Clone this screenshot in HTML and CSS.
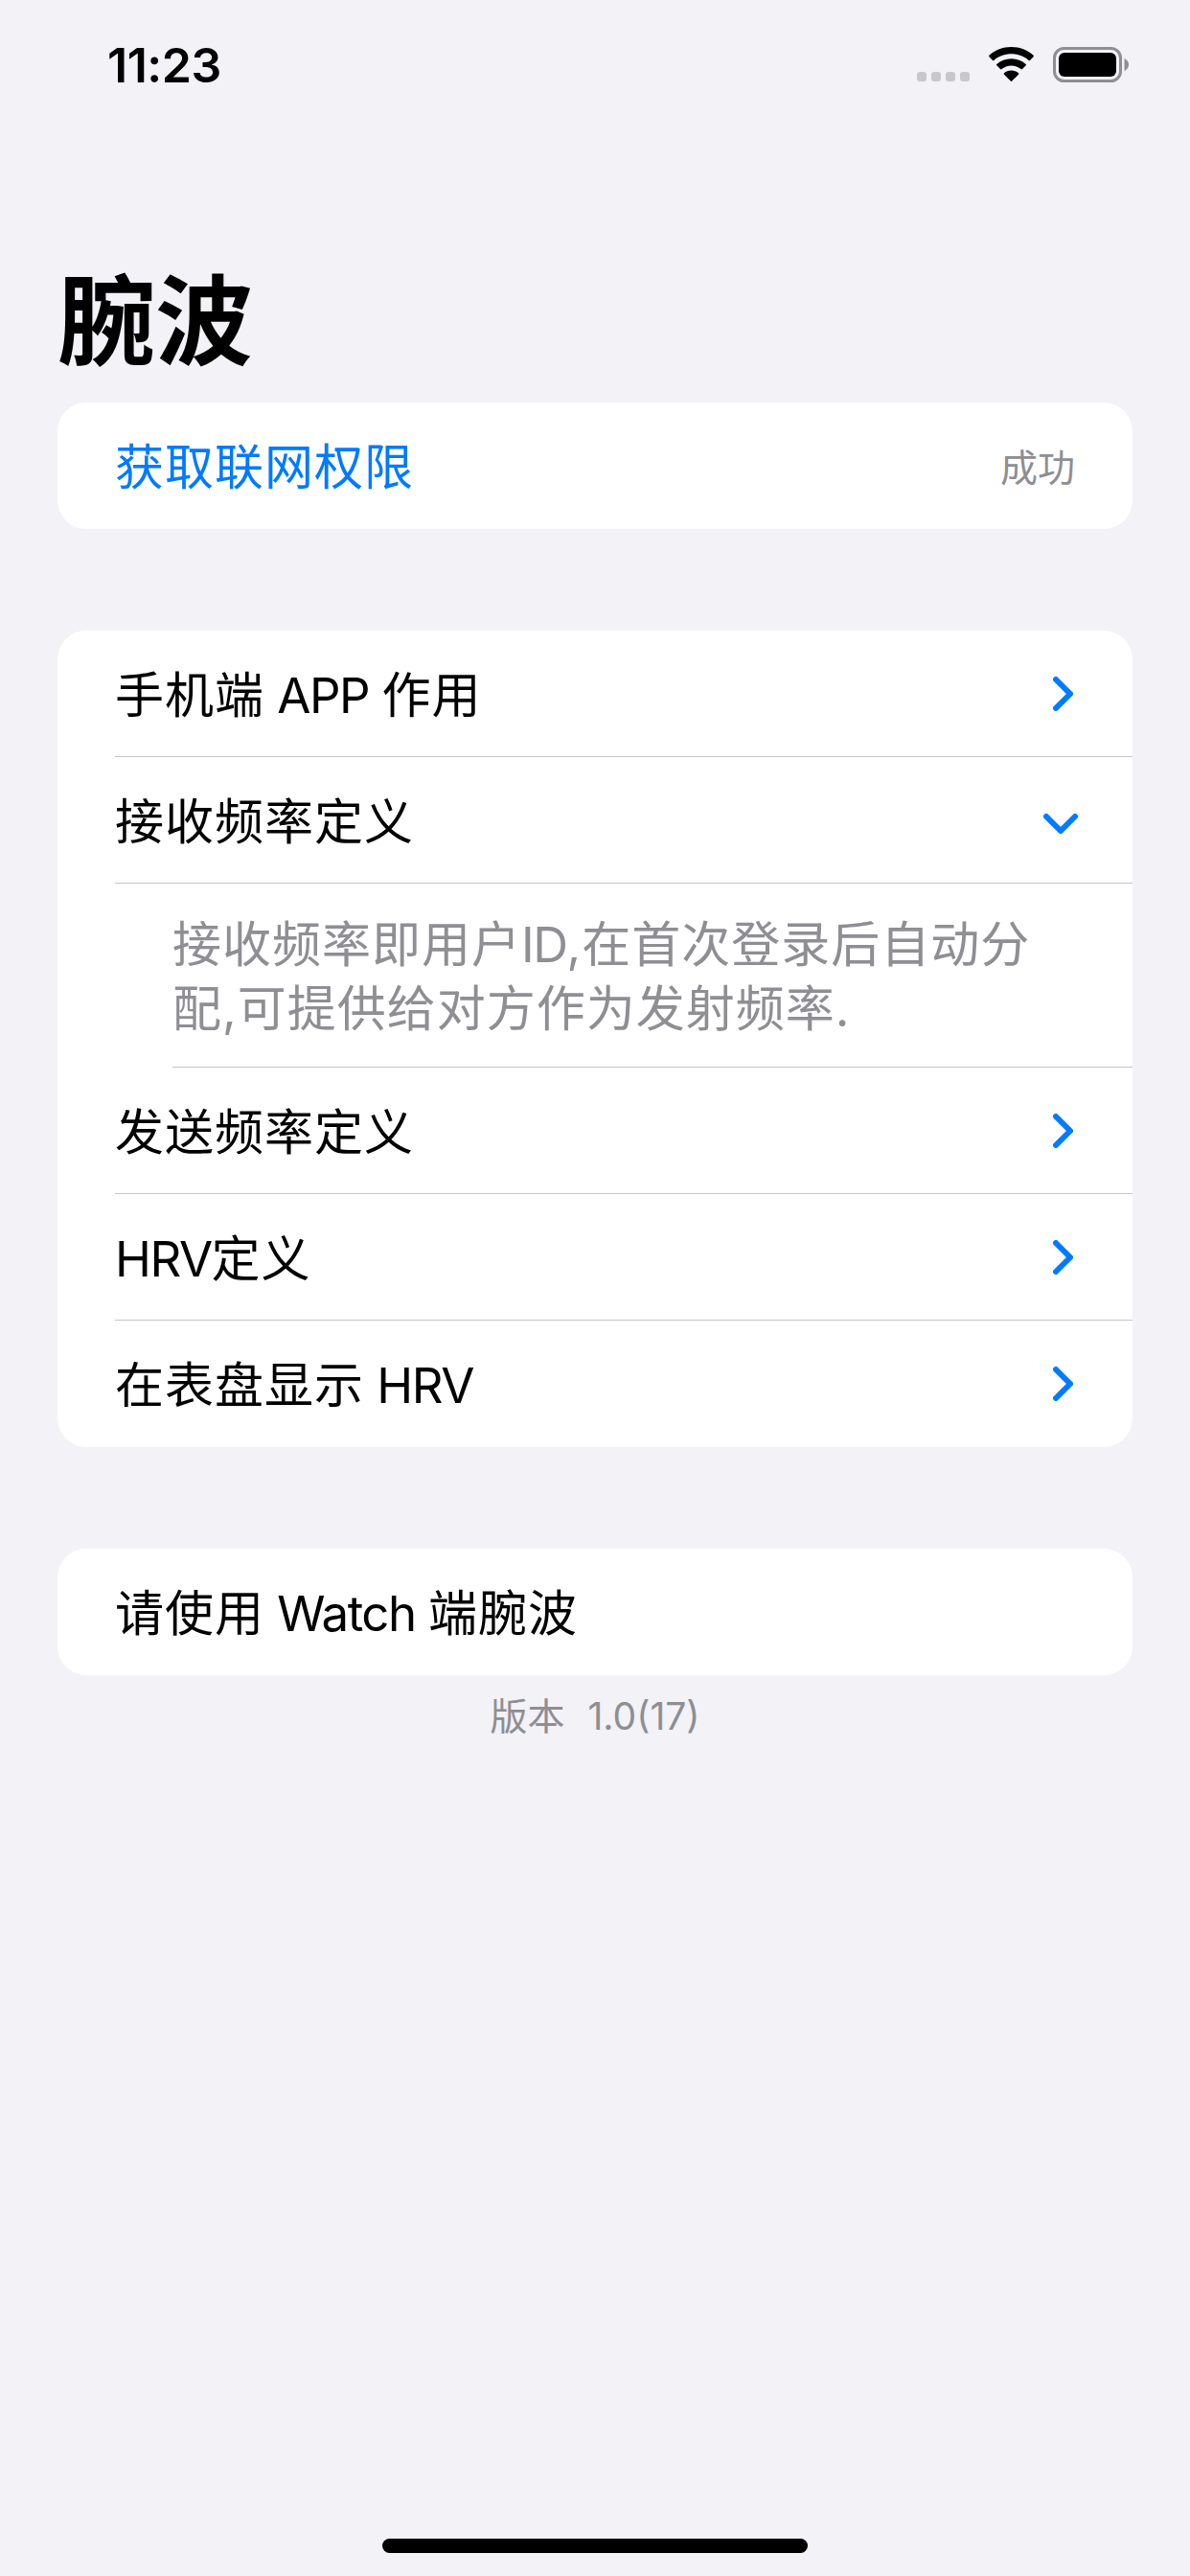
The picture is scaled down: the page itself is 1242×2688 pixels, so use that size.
FILE: index.html
```html
<!DOCTYPE html>
<html>
<head>
    <title>腕波</title>
    <link rel="stylesheet" href="styles.css">
</head>
<body>
    <div class="status-bar">
        <span class="time">11:23</span>
        <div class="status-icons">
            <div class="signal">
                <span class="dot"></span>
                <span class="dot"></span>
                <span class="dot"></span>
                <span class="dot"></span>
            </div>
            <svg class="wifi" width="47" height="36" viewBox="0 0 47 36">
                <path d="M23.5 0C14.6 0 6.6 3.3 0.4 8.8a1 1 0 0 0 0 1.4l3.6 3.7a1 1 0 0 0 1.4 0C10.2 9.700 16.500 7.300 23.500 7.300s13.300 2.400 18.100 6.600a1 1 0 0 0 1.400 0l3.600-3.700a1 1 0 0 0 0-1.400C40.400 3.300 32.400 0 23.500 0z"/>
                <path d="M23.500 12.200c-5.800 0-11.100 2.100-15.200 5.700a1 1 0 0 0 0 1.400l3.700 3.700a1 1 0 0 0 1.400 0.100c2.700-2.300 6.300-3.700 10.100-3.700s7.400 1.400 10.100 3.700a1 1 0 0 0 1.400-0.100l3.700-3.700a1 1 0 0 0 0-1.400c-4.100-3.600-9.400-5.700-15.200-5.700z"/>
                <path d="M23.500 24.500c-2.900 0-5.500 1-7.500 2.800a1 1 0 0 0 0 1.400l6.800 6.900a1 1 0 0 0 1.400 0l6.800-6.900a1 1 0 0 0 0-1.400c-2-1.800-4.600-2.800-7.500-2.800z"/>
            </svg>
            <svg class="battery" width="79" height="37" viewBox="0 0 79 37">
                <rect x="1.500" y="1.500" width="69" height="34" rx="10" fill="none" stroke="#8e8e93" stroke-width="3"/>
                <rect x="6" y="6" width="60" height="25" rx="6" fill="#000"/>
                <path d="M74.500 12v13c2.500-1 4.500-3.500 4.500-6.500s-2-5.500-4.500-6.500z" fill="#8e8e93"/>
            </svg>
        </div>
    </div>

    <h1 class="page-title">腕波</h1>

    <div class="card card-first">
        <div class="row">
            <span class="row-title link">获取联网权限</span>
            <span class="row-value">成功</span>
        </div>
    </div>

    <div class="card">
        <div class="row row-line">
            <span class="row-title">手机端 <span class="latin">APP</span> 作用</span>
            <svg class="chevron" width="21" height="36" viewBox="0 0 21 36"><path d="M3 3l15 15L3 33"/></svg>
        </div>
        <div class="row row-line">
            <span class="row-title">接收频率定义</span>
            <svg class="chevron-down" width="36" height="21" viewBox="0 0 36 21"><path d="M3 3l15 15L33 3"/></svg>
        </div>
        <div class="detail">
            <p class="detail-text">
                <span class="detail-line">接收频率即用户<span class="latin">ID</span>,在首次登录后自动分</span>
                <span class="detail-line">配,可提供给对方作为发射频率.</span>
            </p>
        </div>
        <div class="row row-line">
            <span class="row-title">发送频率定义</span>
            <svg class="chevron" width="21" height="36" viewBox="0 0 21 36"><path d="M3 3l15 15L3 33"/></svg>
        </div>
        <div class="row row-line">
            <span class="row-title"><span class="latin">HRV</span>定义</span>
            <svg class="chevron" width="21" height="36" viewBox="0 0 21 36"><path d="M3 3l15 15L3 33"/></svg>
        </div>
        <div class="row">
            <span class="row-title">在表盘显示 <span class="latin">HRV</span></span>
            <svg class="chevron" width="21" height="36" viewBox="0 0 21 36"><path d="M3 3l15 15L3 33"/></svg>
        </div>
    </div>

    <div class="card">
        <div class="row">
            <span class="row-title">请使用 <span class="latin">Watch</span> 端腕波</span>
        </div>
    </div>
    <div class="version"><span>版本</span><span>1.0(17)</span></div>

    <div class="home-indicator"></div>
</body>
</html>
```

FILE: styles.css
```css
* {
    margin: 0;
    padding: 0;
    box-sizing: border-box;
}

body {
    font-family: Inter, 'Noto Sans CJK SC', sans-serif;
    width: 1242px;
    height: 2688px;
    background-color: #f2f2f7;
    color: #000;
    display: flex;
    flex-direction: column;
    padding: 0 60px;
    overflow: hidden;
}

.status-bar {
    display: flex;
    justify-content: space-between;
    align-items: flex-start;
    height: 100px;
    margin: 0 -60px;
    padding: 41px 64px 0 112px;
}

.time {
    font-size: 50px;
    line-height: 54px;
    font-weight: 600;
    letter-spacing: -0.5px;
}

.status-icons {
    display: flex;
    align-items: flex-start;
    padding-top: 8px;
}

.signal {
    display: flex;
    gap: 5px;
    padding-top: 26px;
    margin-right: 20px;
}

.dot {
    width: 10px;
    height: 10px;
    border-radius: 3px;
    background-color: #c7c7cc;
}

.wifi {
    margin-right: 20px;
}

.page-title {
    font-size: 102px;
    line-height: 132px;
    font-weight: 700;
    margin-top: 170px;
    height: 150px;
}

.card {
    background-color: #fff;
    border-radius: 30px;
    margin-top: 106px;
    overflow: hidden;
}

.card-first {
    margin-top: 0;
}

.row {
    display: flex;
    justify-content: space-between;
    align-items: center;
    height: 132px;
    padding: 0 60px;
    position: relative;
}

.row-line::after {
    content: "";
    position: absolute;
    left: 60px;
    right: 0;
    bottom: 0;
    height: 1px;
    background-color: #c6c6c8;
}

.row-title {
    font-size: 51px;
    letter-spacing: 1px;
    word-spacing: -2px;
    margin-bottom: 4px;
}

.latin {
    letter-spacing: -1.5px;
}

.link {
    color: #007aff;
}

.row-value {
    font-size: 39px;
    color: #8e8e93;
    margin-bottom: 3px;
}

.chevron {
    margin-right: 2px;
    flex-shrink: 0;
}

.chevron-down {
    margin-top: 7px;
    margin-right: -3px;
    flex-shrink: 0;
}

.chevron path,
.chevron-down path {
    fill: none;
    stroke: #007aff;
    stroke-width: 6;
    stroke-linecap: round;
    stroke-linejoin: round;
}

.detail {
    margin-left: 120px;
    height: 192px;
    padding: 30px 60px 0 0;
    border-bottom: 1px solid #c6c6c8;
}

.detail-text {
    font-size: 51px;
    line-height: 67px;
    letter-spacing: 1px;
    color: #8e8e93;
}

.detail-line {
    display: block;
    white-space: nowrap;
}

.version {
    display: flex;
    justify-content: center;
    gap: 24px;
    font-size: 39px;
    line-height: 50px;
    color: #8e8e93;
    margin-top: 18px;
}

.home-indicator {
    width: 444px;
    height: 15px;
    border-radius: 8px;
    background-color: #000;
    margin: auto auto 24px;
}
```
